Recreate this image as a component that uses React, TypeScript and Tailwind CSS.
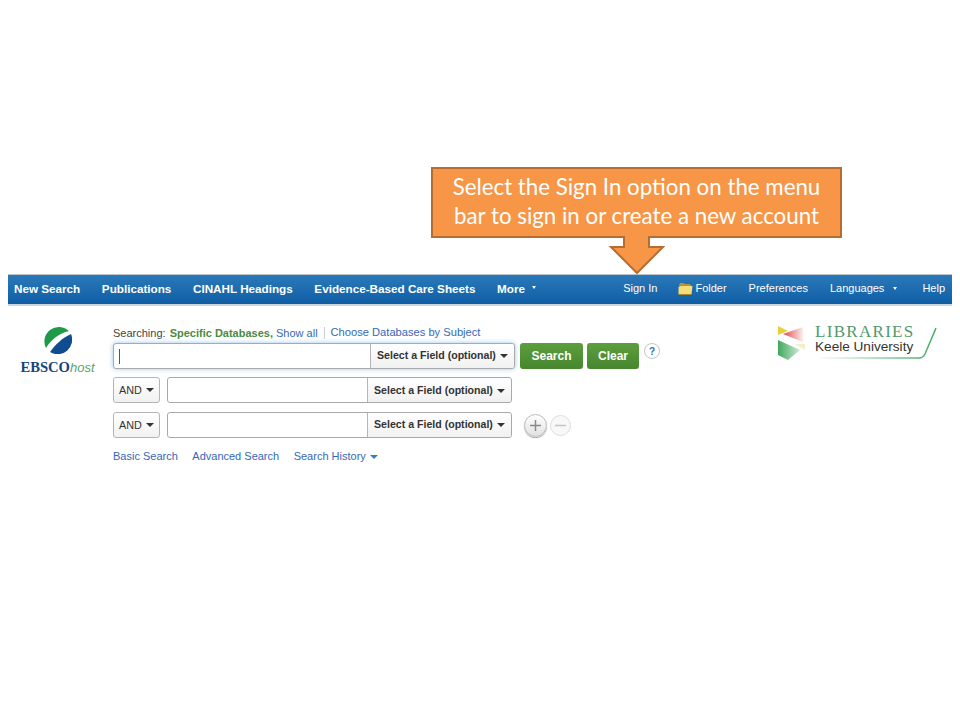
const sans = "font-['Liberation_Sans',Arial,sans-serif]"

const Caret = ({ className = 'border-t-[#333]' }: { className?: string }) => (
  <span className={`inline-block w-0 h-0 border-x-[4px] border-x-transparent border-t-[4px] ${className}`}></span>
)

const NavCaret = ({ className = 'ml-[7px]' }: { className?: string }) => (
  <span className={`inline-block w-0 h-0 border-x-[2.5px] border-x-transparent border-t-[3px] border-t-white mb-[1px] ${className}`}></span>
)

const FieldSelect = ({ className = '' }: { className?: string }) => (
  <div className={`w-[144px] h-full shrink-0 flex items-center pl-[6px] gap-[4px] bg-gradient-to-b from-white to-[#f1f1f1] border-l border-[#b5b5b5] rounded-r-[3px] text-[10.6px] font-bold text-[#333] whitespace-nowrap ${className}`}>
    <span>Select a Field (optional)</span>
    <Caret />
  </div>
)

const BoolSelect = () => (
  <div className="w-[47px] h-[26px] mr-[7px] shrink-0 flex items-center justify-center gap-[4px] rounded-[3px] border border-[#b5b5b5] bg-gradient-to-b from-white to-[#f1f1f1] text-[10.8px] text-[#333]">
    <span>AND</span>
    <Caret />
  </div>
)

const EbscoLogo = () => (
  <div className="w-[105px] shrink-0 flex flex-col items-center pt-[19px] pr-[6px]">
    <svg width="29" height="29" viewBox="0 0 29 29">
      <path d="M3 23A14.500 14.500 0 0 1 26 6C16 8 8 15 3 23z" fill="#1f9a49" />
      <path d="M28 9A14.500 14.500 0 0 1 7 27C12 20 19 13 28 9z" fill="#0f4c92" />
    </svg>
    <div className="leading-none mt-[5px] whitespace-nowrap">
      <span className="font-['Liberation_Serif',serif] font-bold text-[14.6px] text-[#14457f]">EBSCO</span>
      <span className="font-['Liberation_Sans',sans-serif] italic text-[13px] text-[#5aa469]">host</span>
    </div>
  </div>
)

const KeeleLogo = () => (
  <div className="relative w-[162px] h-[40px] mt-[19px] mr-[12px] shrink-0 flex items-start">
    <svg width="30" height="36" viewBox="0 0 30 36" className="shrink-0">
      <defs>
        <linearGradient id="red" x1="0" x2="1" y1="0" y2="0">
          <stop offset="0" stopColor="#e0474c" />
          <stop offset="1" stopColor="#fbeeec" />
        </linearGradient>
        <linearGradient id="grn" x1="0" x2="1" y1="0" y2="0">
          <stop offset="0" stopColor="#3fa860" />
          <stop offset="1" stopColor="#cfe9d5" />
        </linearGradient>
      </defs>
      <path d="M0 1L10 6 0 10z" fill="#e8cf3f" />
      <path d="M5 9L25 2V17z" fill="url(#red)" />
      <path d="M0 15L22 25 10 35 0 30z" fill="url(#grn)" />
      <path d="M17 19H27V25z" fill="#f5efc4" />
    </svg>
    <div className="ml-[7px] -mt-[2px]">
      <div className="font-['Liberation_Serif',serif] text-[17px] leading-[17px] tracking-[1.3px] text-[#4f9a6c]">LIBRARIES</div>
      <div className="font-['Liberation_Sans',sans-serif] text-[13.6px] leading-[13px] text-[#333]">Keele University</div>
    </div>
    <svg width="160" height="40" viewBox="0 0 160 40" className="absolute left-0 top-0" fill="none">
      <defs>
        <linearGradient id="sw" x1="0" x2="1" y1="0" y2="0">
          <stop offset="0" stopColor="#3fa860" stopOpacity="0" />
          <stop offset="1" stopColor="#3fa860" />
        </linearGradient>
      </defs>
      <path d="M38 33H141Q145 33 147 29L158 3" stroke="url(#sw)" strokeWidth="1.500" />
    </svg>
  </div>
)

export default function App() {
  return (
    <div className={`w-[960px] h-[720px] bg-white overflow-hidden ${sans}`}>
      {/* callout */}
      <div className="pt-[167px] pl-[431px]">
        <div className="relative z-10 w-[411px] h-[71px] pb-[4px] bg-[#f79646] border-2 border-[#b66d31] flex flex-col items-center justify-center text-white font-['Lato',sans-serif] text-[22.3px] leading-[29px] whitespace-nowrap">
          <div>Select the Sign In option on the menu</div>
          <div>bar to sign in or create a new account</div>
          <svg width="58" height="39" viewBox="0 0 58 39" className="absolute left-[175px] top-[67px]">
            <path d="M16 0V11H3L29 37 55 11H41V0" fill="#f79646" stroke="#b66d31" strokeWidth="2" />
          </svg>
        </div>
      </div>

      {/* nav bar */}
      <div className="mx-[8px] mt-[36px] h-[32px] flex items-center justify-between pl-[6px] pr-[7px] pb-[2px] bg-gradient-to-b from-[#2a79b9] to-[#0e5ea5] border-t border-[#b9c4cc] border-b-2 border-b-[#c9d6e0] text-white text-[11.7px] whitespace-nowrap">
        <div className="flex gap-[21.6px] font-bold">
          <span>New Search</span>
          <span>Publications</span>
          <span>CINAHL Headings</span>
          <span>Evidence-Based Care Sheets</span>
          <span className="flex items-center">More<NavCaret /></span>
        </div>
        <div className="flex items-center text-[11px]">
          <span>Sign In</span>
          <svg width="15" height="13" viewBox="0 0 15 13" className="ml-[21px] mr-[2px]">
            <path d="M1 3l1-2h4l1 1h5l1 2H1z" fill="#b8922e" />
            <path d="M0.500 12V5l2-1h12l-1 8z" fill="#f4dc7a" />
            <path d="M0.500 12h13v1H0.500z" fill="#a9872b" />
          </svg>
          <span>Folder</span>
          <span className="ml-[22px]">Preferences</span>
          <span className="ml-[22px] flex items-center">Languages<NavCaret className="ml-[9px]" /></span>
          <span className="ml-[25px]">Help</span>
        </div>
      </div>

      {/* search area */}
      <div className="flex mx-[8px]">
        <EbscoLogo />
        <div className="flex-1 pt-[20px]">
          <div className="flex items-center h-[14px] mb-[3px] text-[11px] leading-none text-[#444] whitespace-nowrap">
            <span>Searching:&nbsp;</span>
            <span className="font-bold text-[#4c8a3e] ml-[1px]">Specific Databases,</span>
            <span className="text-[#3767b8] ml-[3px]">Show all</span>
            <span className="w-px h-[12px] bg-[#c5d0dc] mx-[6px]"></span>
            <span className="text-[#3767b8] text-[11.15px]">Choose Databases by Subject</span>
          </div>

          <div className="flex items-center h-[26px] mb-[8px]">
            <div className="w-[402px] h-full flex rounded-[3px] border border-[#a9a9a9] shadow-[0_0_5px_#9cc7ea] bg-white">
              <div className="flex-1 flex items-center pl-[5px]">
                <span className="w-px h-[15px] bg-[#555]"></span>
              </div>
              <FieldSelect />
            </div>
            <button className="ml-[5px] w-[63px] h-[26px] rounded-[3px] bg-gradient-to-b from-[#5c9e3f] to-[#47862d] text-white font-bold text-[12px]">Search</button>
            <button className="ml-[4px] w-[52px] h-[26px] rounded-[3px] bg-gradient-to-b from-[#5c9e3f] to-[#47862d] text-white font-bold text-[12px]">Clear</button>
            <span className="ml-[5px] -mt-[10px] w-[16px] h-[16px] rounded-full border border-[#c5c5c5] flex items-center justify-center text-[10px] font-bold text-[#2a6fc4]">?</span>
          </div>

          <div className="flex items-center h-[26px] mb-[9px]">
            <BoolSelect />
            <div className="w-[345px] h-full flex rounded-[3px] border border-[#a9a9a9] bg-white">
              <div className="flex-1"></div>
              <FieldSelect className="pt-[1px]" />
            </div>
          </div>

          <div className="flex items-center h-[26px] mb-[8px]">
            <BoolSelect />
            <div className="w-[345px] h-full flex rounded-[3px] border border-[#a9a9a9] bg-white">
              <div className="flex-1"></div>
              <FieldSelect />
            </div>
            <span className="ml-[12px] w-[23px] h-[23px] rounded-full border border-[#bbb] bg-gradient-to-b from-white to-[#e2e2e2] shadow-[0_1px_1px_#aaa] flex items-center justify-center">
              <svg width="13" height="13" viewBox="0 0 13 13"><path d="M6.500 1v11M1 6.500h11" stroke="#8a8a8a" strokeWidth="1.500" /></svg>
            </span>
            <span className="ml-[3px] w-[21px] h-[21px] rounded-full border border-[#ddd] bg-[#f8f8f8] flex items-center justify-center">
              <svg width="11" height="11" viewBox="0 0 11 11"><path d="M0 5.500h11" stroke="#c4c4c4" strokeWidth="1.500" /></svg>
            </span>
          </div>

          <div className="flex items-center gap-[14.500px] mt-[13px] text-[11px] leading-none text-[#3767b8] whitespace-nowrap">
            <span>Basic Search</span>
            <span>Advanced Search</span>
            <span className="flex items-center gap-[4px]">Search History<Caret className="border-t-[#2a7fd0]" /></span>
          </div>
        </div>
        <KeeleLogo />
      </div>
    </div>
  )
}
